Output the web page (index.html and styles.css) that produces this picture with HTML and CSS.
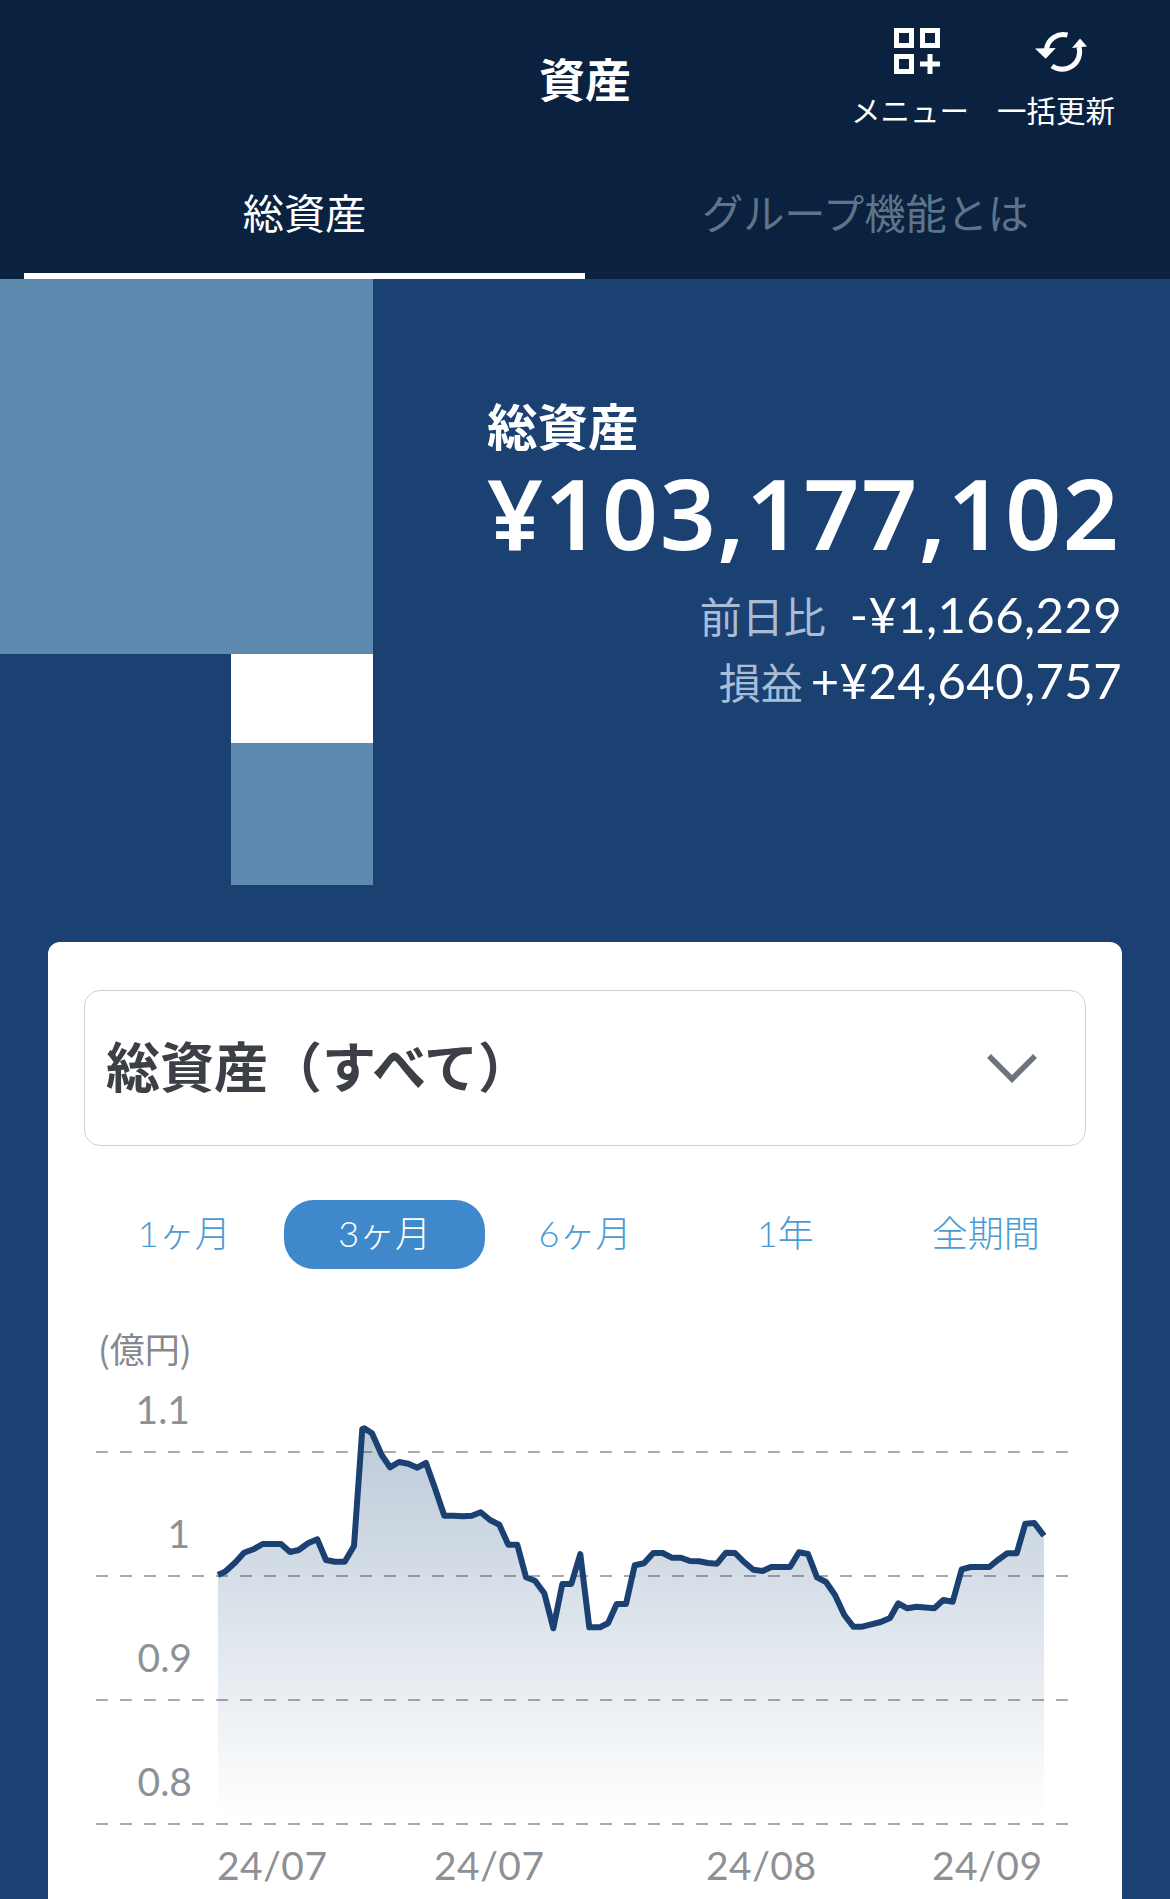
FILE: index.html
```html
<!DOCTYPE html>
<html lang="ja">
<head>
<meta charset="utf-8">
<title>資産</title>
<link rel="stylesheet" href="styles.css">
</head>
<body>
<div class="page">
  <header class="app-header">
    <div class="top-bar">
      <div class="top-spacer"></div>
      <h1 class="title">資産</h1>
      <div class="actions">
        <div class="action">
          <svg class="action-icon action-icon-menu" width="46" height="46" viewBox="0 0 46 46" fill="none" stroke="#fff" stroke-width="5">
            <rect x="2.500" y="2.500" width="15" height="15"/>
            <rect x="28.500" y="2.500" width="15" height="15"/>
            <rect x="2.500" y="28.500" width="15" height="15"/>
            <path d="M26 36h20M36 26v20"/>
          </svg>
          <span class="action-label">メニュー</span>
        </div>
        <div class="action">
          <svg class="action-icon action-icon-refresh" width="52" height="46" viewBox="0 0 52 46" fill="none" stroke="#fff" stroke-width="5">
            <g transform="translate(0 1)">
              <path d="M32.500 6A17 17 0 0 0 11.500 20"/>
              <path d="M17 37A17.500 17.500 0 0 0 44 18"/>
              <path d="M0 19.500L20.800 19L10.700 29.700Z" fill="#fff" stroke="none"/>
              <path d="M37 19L52 17.500L45 9.500Z" fill="#fff" stroke="none"/>
            </g>
          </svg>
          <span class="action-label">一括更新</span>
        </div>
      </div>
    </div>
    <nav class="tabs">
      <div class="tab tab-active">総資産</div>
      <div class="tab">グループ機能とは</div>
    </nav>
  </header>

  <section class="hero">
    <div class="treemap">
      <div class="tile tile-large"></div>
      <div class="tile tile-white"></div>
      <div class="tile tile-small"></div>
    </div>
    <div class="summary">
      <div class="summary-label">総資産</div>
      <div class="summary-amount">¥103,177,102</div>
      <div class="summary-row summary-row-first"><span class="row-label row-label-wide">前日比</span><span class="row-value">-¥1,166,229</span></div>
      <div class="summary-row"><span class="row-label">損益</span><span class="row-value">+¥24,640,757</span></div>
    </div>
  </section>

  <main class="card">
    <div class="select">
      <span class="select-text">総資産（すべて）</span>
      <svg class="chevron" width="50" height="30" viewBox="0 0 50 30" fill="none" stroke="#6d7480" stroke-width="5.500">
        <path d="M2 3L25 26L48 3"/>
      </svg>
    </div>
    <div class="periods">
      <div class="period">1ヶ月</div>
      <div class="period period-active">3ヶ月</div>
      <div class="period">6ヶ月</div>
      <div class="period">1年</div>
      <div class="period">全期間</div>
    </div>
    <svg class="chart" width="1074" height="609" viewBox="48 1290 1074 609">
      <defs>
        <linearGradient id="areaFill" gradientUnits="userSpaceOnUse" x1="0" y1="1428" x2="0" y2="1818">
          <stop offset="0" stop-color="#1d4d7d" stop-opacity="0.3"/>
          <stop offset="1" stop-color="#1d4d7d" stop-opacity="0"/>
        </linearGradient>
      </defs>
      <text class="axis-unit" x="98" y="1363">(億円)</text>
      <g class="grid">
        <path d="M96 1452H1068"/>
        <path d="M96 1576H1068"/>
        <path d="M96 1700H1068"/>
        <path d="M96 1824H1068"/>
      </g>
      <path fill="url(#areaFill)" d="M218 1824V1575L225 1571.700L235 1562.700L244 1552.700L253.300 1549.300L262.700 1544L281 1544L290 1552L298.700 1550L308 1543.300L317.300 1539.300L326 1560L335 1561.700L344.700 1561.700L354 1546L362.300 1429L364.300 1428.300L372 1433.300L381.700 1455L390 1467.300L399 1462L408.300 1463.700L417.300 1467.700L426 1463L435 1488.300L444.300 1515.700L453.300 1515.700L463.300 1516.300L471.700 1515.700L480.700 1512.300L490 1520L499.300 1524.700L508.300 1544.700L517.300 1544.700L526 1577.300L535 1580.700L544.300 1593.300L553.300 1628.300L562.300 1584L571.300 1584L580.300 1554L589.300 1627.300L600 1627.300L608 1623.300L616.700 1604L626 1604L634.700 1565.300L644 1563.300L653.300 1553L662.700 1553L671.700 1557.700L681 1557.700L690 1561L699 1561.300L708 1563L717 1563.700L726 1552.700L735 1553L744 1562L753.300 1569.700L762.700 1571L771.300 1567L790 1567L799 1552.300L808 1554L817 1577.300L826 1582L835 1595L844.300 1615L853.300 1626.700L862.300 1626.700L871.300 1624.300L880.700 1622L890 1618L898.300 1603.300L907.300 1608.300L916.700 1606.700L934.300 1608.300L943.300 1600L952.700 1601.700L961.700 1569.300L970.700 1567L989.300 1567L998.300 1559.700L1007.300 1553.300L1016.700 1553.300L1025.300 1523.700L1034.300 1523L1044 1535.700V1824Z"/>
      <path class="line" d="M218 1575L225 1571.700L235 1562.700L244 1552.700L253.300 1549.300L262.700 1544L281 1544L290 1552L298.700 1550L308 1543.300L317.300 1539.300L326 1560L335 1561.700L344.700 1561.700L354 1546L362.300 1429L364.300 1428.300L372 1433.300L381.700 1455L390 1467.300L399 1462L408.300 1463.700L417.300 1467.700L426 1463L435 1488.300L444.300 1515.700L453.300 1515.700L463.300 1516.300L471.700 1515.700L480.700 1512.300L490 1520L499.300 1524.700L508.300 1544.700L517.300 1544.700L526 1577.300L535 1580.700L544.300 1593.300L553.300 1628.300L562.300 1584L571.300 1584L580.300 1554L589.300 1627.300L600 1627.300L608 1623.300L616.700 1604L626 1604L634.700 1565.300L644 1563.300L653.300 1553L662.700 1553L671.700 1557.700L681 1557.700L690 1561L699 1561.300L708 1563L717 1563.700L726 1552.700L735 1553L744 1562L753.300 1569.700L762.700 1571L771.300 1567L790 1567L799 1552.300L808 1554L817 1577.300L826 1582L835 1595L844.300 1615L853.300 1626.700L862.300 1626.700L871.300 1624.300L880.700 1622L890 1618L898.300 1603.300L907.300 1608.300L916.700 1606.700L934.300 1608.300L943.300 1600L952.700 1601.700L961.700 1569.300L970.700 1567L989.300 1567L998.300 1559.700L1007.300 1553.300L1016.700 1553.300L1025.300 1523.700L1034.300 1523L1044 1535.700"/>
      <g class="axis-y">
        <text x="190" y="1424">1.1</text>
        <text x="190" y="1548">1</text>
        <text x="192" y="1672">0.9</text>
        <text x="192" y="1796">0.8</text>
      </g>
      <g class="axis-x">
        <text x="217" y="1880">24/07</text>
        <text x="434" y="1880">24/07</text>
        <text x="706" y="1880">24/08</text>
        <text x="932" y="1880">24/09</text>
      </g>
    </svg>
  </main>
</div>
</body>
</html>
```

FILE: styles.css
```css
* { box-sizing: border-box; }
html, body { margin: 0; padding: 0; }
body {
  font-family: "Noto Sans CJK JP", "Noto Sans", sans-serif;
  background: #1b4173;
}
.page {
  width: 1170px;
  height: 1899px;
  overflow: hidden;
  background: #1b4173;
  display: flex;
  flex-direction: column;
}

/* header */
.app-header {
  background: #0a2240;
  height: 279px;
  flex: none;
  display: flex;
  flex-direction: column;
}
.top-bar {
  height: 160px;
  display: grid;
  grid-template-columns: 1fr auto 1fr;
  align-items: start;
}
.title {
  margin: 45px 0 0;
  font-size: 46px;
  line-height: 64px;
  font-weight: 700;
  color: #fff;
}
.actions {
  display: flex;
  justify-content: flex-end;
  gap: 28px;
  padding: 28px 55px 0 0;
}
.action {
  display: flex;
  flex-direction: column;
  align-items: center;
}
.action-icon { display: block; }
.action-icon-menu { margin-left: 14px; }
.action-icon-refresh { margin-left: 10px; }
.action-label {
  font-size: 29.500px;
  line-height: 40px;
  color: #fff;
  margin-top: 15px;
  white-space: nowrap;
}
.tabs {
  flex: 1;
  display: grid;
  grid-template-columns: 561px 561px;
  padding: 0 24px;
}
.tab {
  font-size: 41.200px;
  line-height: 60px;
  padding-top: 21px;
  text-align: center;
  color: #5f7489;
}
.tab-active {
  color: #fff;
  border-bottom: 6px solid #fff;
}

/* hero */
.hero {
  flex: none;
  height: 663px;
  display: flex;
}
.treemap {
  width: 373px;
  display: flex;
  flex-direction: column;
  align-items: flex-end;
  flex: none;
}
.tile { width: 142px; }
.tile-large { width: 373px; height: 375px; background: #5f8aaf; }
.tile-white { height: 89px; background: #fff; }
.tile-small { height: 142px; background: #5f8aaf; }
.summary {
  flex: 1;
  min-width: 0;
  padding: 110px 48px 0 114px;
  color: #fff;
}
.summary-label {
  font-size: 50.500px;
  line-height: 71px;
  font-weight: 700;
}
.summary-amount {
  font-family: "Noto Sans", sans-serif;
  font-size: 98px;
  line-height: 104px;
  font-weight: 600;
  letter-spacing: 1.500px;
  white-space: nowrap;
}
.summary-row {
  display: flex;
  justify-content: flex-end;
  align-items: baseline;
  height: 66px;
  line-height: 66px;
  white-space: nowrap;
}
.summary-row-first { margin-top: 17px; }
.row-label {
  font-size: 42px;
  color: #a9bdd6;
  margin-right: 8px;
}
.row-label-wide { margin-right: 24px; }
.row-value {
  font-family: Lato, "Noto Sans CJK JP", sans-serif;
  font-size: 49px;
  letter-spacing: 0.4px;
  color: #fff;
}

/* card */
.card {
  flex: 1;
  margin: 0 48px;
  padding: 48px 0 0;
  background: #fff;
  border-radius: 12px 12px 0 0;
}
.select {
  height: 156px;
  margin: 0 36px;
  padding: 0 48px 0 21px;
  border: 1px solid #cfd2d5;
  border-radius: 16px;
  display: flex;
  align-items: center;
  justify-content: space-between;
}
.select-text {
  font-size: 54px;
  line-height: 72px;
  padding-bottom: 6px;
  font-weight: 700;
  color: #3c4046;
}
.chevron { display: block; }
.periods {
  margin: 54px 36px 21px;
  display: grid;
  grid-template-columns: repeat(5, 1fr);
}
.period {
  height: 69px;
  line-height: 67px;
  text-align: center;
  font-family: Lato, "Noto Sans CJK JP", sans-serif;
  font-size: 36px;
  font-weight: 300;
  color: #4a9bd4;
  border-radius: 30px;
}
.period-active {
  background: #3e88cb;
  color: #fff;
}

/* chart */
.chart { display: block; }
.grid path {
  stroke: #8c8f94;
  stroke-width: 1.500;
  stroke-dasharray: 12 12;
  fill: none;
}
.line {
  fill: none;
  stroke: #1b4173;
  stroke-width: 6;
  stroke-linejoin: round;
}
.axis-unit {
  font-size: 35px;
  fill: #85888d;
}
.axis-y text, .axis-x text {
  font-family: Lato, "Noto Sans CJK JP", sans-serif;
  font-size: 39px;
  fill: #8d9095;
}
.axis-y text { text-anchor: end; }
.axis-x text { letter-spacing: 0.5px; }
```
